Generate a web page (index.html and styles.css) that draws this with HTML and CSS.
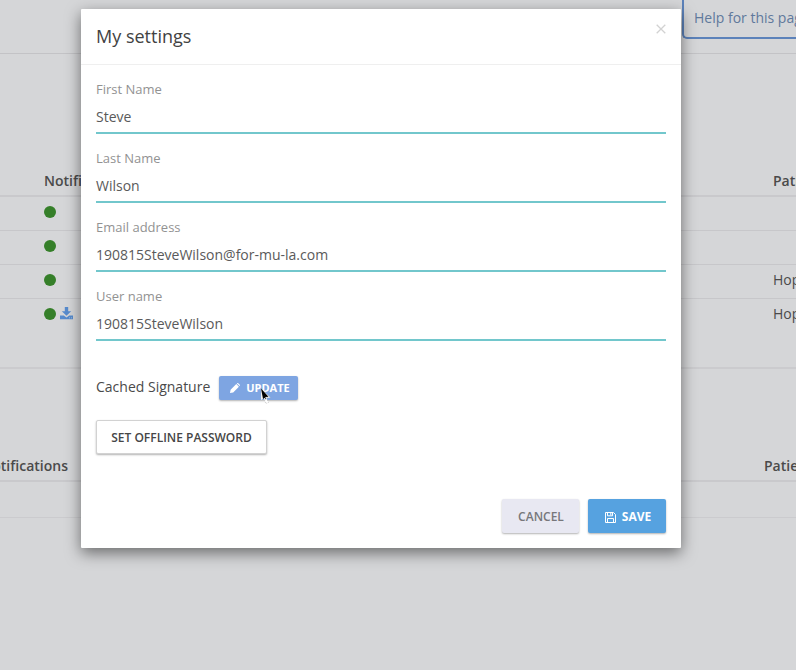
FILE: index.html
```html
<!DOCTYPE html>
<html lang="en">
<head>
<meta charset="utf-8">
<title>My settings</title>
<link rel="stylesheet" href="styles.css">
</head>
<body>
<div class="page">
  <header class="topbar"><a class="help">Help for this page</a></header>
  <section class="table table-main">
    <div class="row head"><span>Notifi</span><span>Patient</span></div>
    <div class="row"><span><i class="dot"></i></span><span></span></div>
    <div class="row"><span><i class="dot"></i></span><span></span></div>
    <div class="row"><span><i class="dot"></i></span><span>Hope</span></div>
    <div class="row last"><span><i class="dot"></i><svg class="download" viewBox="0 0 13 13"><path d="M4.800 0h3.400v4.200h3L6.500 8.800 1.800 4.200h3zM0 8.500h3.800l2.700 2 2.700-2H13V12.300H0z"/><path class="notch" d="M9 10.500h1v.8H9zm2 0h1v.8h-1z"/></svg></span><span>Hope</span></div>
  </section>
  <section class="table table-second">
    <div class="row head"><span>Notifications</span><span>Patient</span></div>
    <div class="row"></div>
  </section>
</div>
<div class="modal" role="dialog">
  <div class="modal-header">
    <h1>My settings</h1>
    <svg class="close" viewBox="0 0 10 10"><path d="M.7.7l8.600 8.600M9.300.7L.7 9.300"/></svg>
  </div>
  <div class="modal-body">
    <div class="field"><label>First Name</label><div class="value">Steve</div></div>
    <div class="field"><label>Last Name</label><div class="value">Wilson</div></div>
    <div class="field"><label>Email address</label><div class="value">190815SteveWilson@for-mu-la.com</div></div>
    <div class="field"><label>User name</label><div class="value">190815SteveWilson</div></div>
    <div class="signature">
      <span>Cached Signature</span>
      <button class="btn update">
        <svg class="pencil" viewBox="0 0 10 10"><path d="M0 10l.6-3.200L6.300 1.100l2.600 2.600-5.700 5.700zM6.900.5c.5-.6 1-.6 1.500-.1l1.200 1.200c.5.500.5 1-.1 1.500z"/></svg>UPDATE
        <svg class="cursor" viewBox="0 0 12 17"><path d="M1 .5v12l2.800-2.400 2 5.400 2.700-1-2.200-4.800h4.200z"/><path class="core" d="M1 .5l7.500 8.200-3.200.3 1 3-1.800-2.300-1.500 1.300z"/></svg>
      </button>
    </div>
    <button class="btn offline">SET OFFLINE PASSWORD</button>
  </div>
  <div class="modal-footer">
    <button class="btn cancel">CANCEL</button>
    <button class="btn save"><svg class="disk" viewBox="0 0 11 11"><path d="M.5.5h8l2 2v8H.5zM2.500.5v3.300h5V.5M2.500 10.500V6.500h6v4M5.800 1v2"/></svg>SAVE</button>
  </div>
</div>
</body>
</html>
```

FILE: styles.css
```css
* { box-sizing: border-box; }
body {
  margin: 0;
  width: 796px;
  height: 670px;
  overflow: hidden;
  background: #d5d6d8;
  font: 14px/20px "Open Sans", sans-serif;
  color: #4a4a4a;
}
.page { height: 670px; overflow: hidden; }
.topbar {
  height: 54px;
  border-bottom: 1px solid #c3c3c6;
  display: flex;
  justify-content: flex-end;
  align-items: flex-start;
}
.help {
  width: 114px;
  height: 39px;
  padding: 8px 0 0 10px;
  border: 2px solid #5c82ba;
  border-width: 0 0 2px 2px;
  border-radius: 0 0 0 5px;
  color: #60799c;
  white-space: nowrap;
  overflow: hidden;
}
.table-main { margin-top: 112px; border-bottom: 2px solid #cbcbce; height: 203px; }
.row {
  height: 34px;
  display: grid;
  grid-template-columns: 729px 1fr;
  align-items: center;
  padding: 0 0 4px 44px;
  border-bottom: 1px solid #c7c7ca;
  white-space: nowrap;
  overflow: hidden;
}
.row > span { display: flex; align-items: center; }
.table-main .head { height: 31px; padding-bottom: 0; border-bottom: 2px solid #c9c9cc; }
.head { font-weight: 600; }
.row.last { border-bottom: 0; padding-bottom: 5px; }
.dot { width: 12px; height: 12px; border-radius: 50%; background: #357f29; }
.download { width: 13px; height: 13px; margin-left: 4px; fill: #578bcd; }
.notch { fill: #b8cbe4; }
.table-second { margin-top: 81px; }
.table-second .row { height: 36px; padding: 0; grid-template-columns: 764px 1fr; border-color: #cbcbce; }
.table-second .head { height: 32px; padding-top: 2px; border-bottom: 2px solid #c9c9cc; }
.table-second .head span:first-child { width: 68px; justify-content: flex-end; }

.modal {
  position: absolute;
  left: 81px;
  top: 9px;
  width: 600px;
  height: 539px;
  background: #fff;
  border-radius: 1px;
  box-shadow: 0 5px 15px rgba(0, 0, 0, .5);
  display: flex;
  flex-direction: column;
}
.modal-header {
  height: 56px;
  padding: 0 15px;
  border-bottom: 1px solid #efefef;
  display: flex;
  justify-content: space-between;
}
h1 { margin: 15px 0 0; font-size: 18px; line-height: 25px; font-weight: 400; color: #424242; }
.close { width: 10px; height: 10px; margin-top: 15px; stroke: #d2d2d2; stroke-width: 1.3; fill: none; }
.modal-body { padding: 14px 15px 0; flex: 1; }
.field { height: 69px; }
.field label { display: block; height: 20px; font-size: 13px; color: #929292; }
.value { height: 35px; padding-top: 8px; border-bottom: 2px solid #72c7cc; color: #5a5a5a; }
.signature { height: 24px; margin-top: 21px; display: flex; align-items: center; gap: 8px; }
.signature > span { width: 115px; white-space: nowrap; margin-top: -2px; }
.btn {
  display: flex;
  align-items: center;
  justify-content: center;
  padding: 2px 0 0;
  border: 0;
  border-radius: 2px;
  font: 600 12px/18px "Open Sans", sans-serif;
  white-space: nowrap;
  box-shadow: 0 1px 2px rgba(0, 0, 0, .3);
}
.update { position: relative; width: 79px; height: 24px; padding: 0 0 0 3px; gap: 6px; background: #7ea5e2; color: #fff; font-size: 11px; font-weight: 700; }
.pencil { width: 10px; height: 10px; fill: #fff; }
.cursor { position: absolute; left: 41px; top: 12px; width: 12px; height: 17px; fill: #fff; stroke: #aaa; stroke-width: .6; stroke-dasharray: 1 1; }
.cursor .core { fill: #000; stroke: none; }
.offline { width: 171px; height: 34px; margin-top: 20px; border: 1px solid #d2d2d2; background: #fff; color: #464646; }
.modal-footer { height: 49px; padding-right: 15px; display: flex; justify-content: flex-end; gap: 9px; }
.cancel, .save { height: 34px; }
.cancel { width: 77px; padding-left: 1px; background: #e8e8f2; color: #77777b; }
.save { width: 78px; padding-left: 2px; gap: 6px; background: #56a2e0; color: #fff; font-weight: 700; }
.disk { width: 11px; height: 11px; fill: none; stroke: #fff; stroke-width: 1; }
```
